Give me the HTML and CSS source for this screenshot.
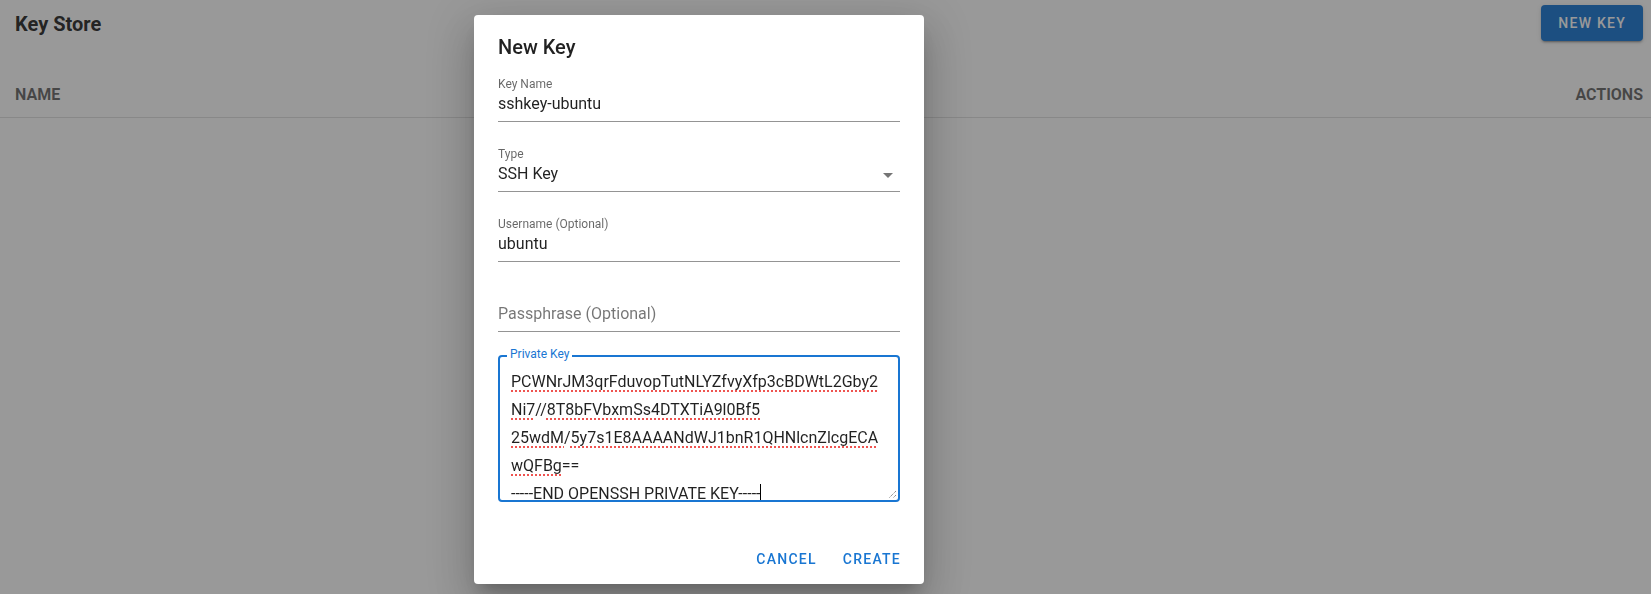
FILE: index.html
```html
<!DOCTYPE html>
<html>
<head>
    <title>Key Store</title>
    <link rel="stylesheet" href="styles.css">
</head>
<body>
  <div class="page">
    <div class="toolbar">
      <div class="toolbar-title">Key Store</div>
      <button class="btn-primary" type="button">New Key</button>
    </div>
    <div class="table-head">
      <span>Name</span>
      <span>Actions</span>
    </div>
  </div>

  <!-- dialog overlay -->
  <div class="scrim"></div>

  <div class="dialog-wrap">
    <div class="dialog">
      <div class="dialog-title">New Key</div>

      <div class="dialog-body">
        <div class="field">
          <label class="field-label">Key Name</label>
          <div class="field-value">sshkey-ubuntu</div>
        </div>

        <div class="field">
          <label class="field-label">Type</label>
          <div class="field-value select-value">
            <span>SSH Key</span>
            <svg class="select-arrow" width="24" height="24" viewBox="0 0 24 24"><path d="M7 10l5 5 5-5z"/></svg>
          </div>
        </div>

        <div class="field">
          <label class="field-label">Username (Optional)</label>
          <div class="field-value">ubuntu</div>
        </div>

        <div class="field field-last">
          <label class="field-label"></label>
          <div class="field-value placeholder">Passphrase (Optional)</div>
        </div>

        <div class="outlined">
          <span class="outlined-label">Private Key</span>
          <div class="key-text">
            <div class="key-line"><span class="misspelled">PCWNrJM3qrFduvopTutNLYZfvyXfp3cBDWtL2Gby2</span></div>
            <div class="key-line"><span class="misspelled">Ni7</span>//<span class="misspelled">8T8bFVbxmSs4DTXTiA9l0Bf5</span></div>
            <div class="key-line"><span class="misspelled">25wdM</span>/<span class="misspelled">5y7s1E8AAAANdWJ1bnR1QHNlcnZlcgECA</span></div>
            <div class="key-line"><span class="misspelled">wQFBg</span>==</div>
            <div class="key-line">-----END OPENSSH PRIVATE KEY-----<span class="caret"></span></div>
          </div>
          <svg class="resize-grip" width="9" height="9" viewBox="0 0 9 9">
            <path d="M8 1L1 8M8 5L5 8" stroke="#777" stroke-width="1" stroke-dasharray="1.2 0.8"/>
          </svg>
        </div>
      </div>

      <div class="dialog-actions">
        <button class="btn-text" type="button">Cancel</button>
        <button class="btn-text" type="button">Create</button>
      </div>
    </div>
  </div>
</body>
</html>
```

FILE: styles.css
```css
body {
    margin: 0;
    font-family: Roboto, "Liberation Sans", Arial, sans-serif;
    background-color: #fff;
    color: rgba(0, 0, 0, 0.87);
}

.toolbar {
    height: 48px;
    display: flex;
    align-items: center;
    justify-content: space-between;
    padding: 0 8px 0 15px;
}
.toolbar-title {
    font-size: 20px;
    font-weight: 700;
    color: rgba(0, 0, 0, 0.87);
}
.btn-primary {
    height: 36px;
    padding: 0 17px;
    margin-top: -2px;
    border: none;
    border-radius: 4px;
    background-color: #1976d2;
    color: #fff;
    font-family: inherit;
    font-size: 14px;
    font-weight: 500;
    letter-spacing: 1.25px;
    text-transform: uppercase;
    box-shadow: 0 3px 1px -2px rgba(0,0,0,.2), 0 2px 2px 0 rgba(0,0,0,.14), 0 1px 5px 0 rgba(0,0,0,.12);
}

.table-head {
    height: 70px;
    display: flex;
    align-items: flex-end;
    justify-content: space-between;
    padding: 0 8px 13px 15px;
    box-sizing: border-box;
    border-bottom: 1px solid rgba(0, 0, 0, 0.12);
    font-size: 16px;
    line-height: 19px;
    font-weight: 700;
    color: rgba(0, 0, 0, 0.6);
    text-transform: uppercase;
}

.scrim {
    position: fixed;
    top: 0;
    left: 0;
    right: 0;
    bottom: 0;
    background-color: rgba(33, 33, 33, 0.46);
    z-index: 5;
}
.dialog-wrap {
    position: fixed;
    top: 0;
    left: 0;
    right: 0;
    bottom: 0;
    z-index: 6;
    display: flex;
    align-items: flex-start;
    padding: 15px 0 0 474px;
}
.dialog {
    width: 450px;
    background-color: #fff;
    border-radius: 4px;
    box-shadow: 0 11px 15px -7px rgba(0,0,0,.2), 0 24px 38px 3px rgba(0,0,0,.14), 0 9px 46px 8px rgba(0,0,0,.12);
}
.dialog-title {
    padding: 16px 24px 13px;
    font-size: 20px;
    line-height: 32px;
    font-weight: 500;
}
.dialog-body {
    padding: 0 24px;
}

.field {
    margin-bottom: 24px;
}
.field-last {
    margin-bottom: 23px;
}
.field-label {
    display: block;
    height: 16px;
    font-size: 12px;
    line-height: 16px;
    color: rgba(0, 0, 0, 0.6);
}
.field-value {
    font-size: 16px;
    line-height: 20px;
    padding: 2px 0 7px;
    border-bottom: 1px solid rgba(0, 0, 0, 0.42);
    color: rgba(0, 0, 0, 0.87);
}
.placeholder {
    color: rgba(0, 0, 0, 0.54);
}
.select-value {
    display: flex;
    align-items: center;
    justify-content: space-between;
    height: 20px;
}
.select-arrow {
    fill: rgba(0, 0, 0, 0.54);
    margin-top: 2px;
}

.outlined {
    position: relative;
    height: 147px;
    box-sizing: border-box;
    border: 2px solid #1976d2;
    border-radius: 4px;
    margin-bottom: 31px;
}
.outlined-label {
    position: absolute;
    top: -11px;
    left: 7px;
    padding: 0 3px;
    background-color: #fff;
    font-size: 12px;
    line-height: 16px;
    color: #1976d2;
}
.key-text {
    height: 100%;
    overflow: hidden;
    padding: 11px 11px 0;
    box-sizing: border-box;
    font-size: 16px;
    line-height: 28px;
    color: rgba(0, 0, 0, 0.87);
}
.key-line {
    height: 28px;
    white-space: nowrap;
}
.misspelled {
    text-decoration: underline dotted #ef5350;
    text-decoration-thickness: 2px;
    text-underline-offset: 3px;
}
.caret {
    display: inline-block;
    width: 1px;
    height: 19px;
    background-color: #000;
    vertical-align: -4px;
}
.resize-grip {
    position: absolute;
    right: 1px;
    bottom: 1px;
}

.dialog-actions {
    display: flex;
    justify-content: flex-end;
    gap: 10px;
    padding: 8px 15px 7px 8px;
}
.btn-text {
    height: 36px;
    padding: 0 8px;
    border: none;
    background: none;
    color: #1976d2;
    font-family: inherit;
    font-size: 14px;
    font-weight: 500;
    letter-spacing: 1.25px;
    text-transform: uppercase;
    cursor: pointer;
}
```
